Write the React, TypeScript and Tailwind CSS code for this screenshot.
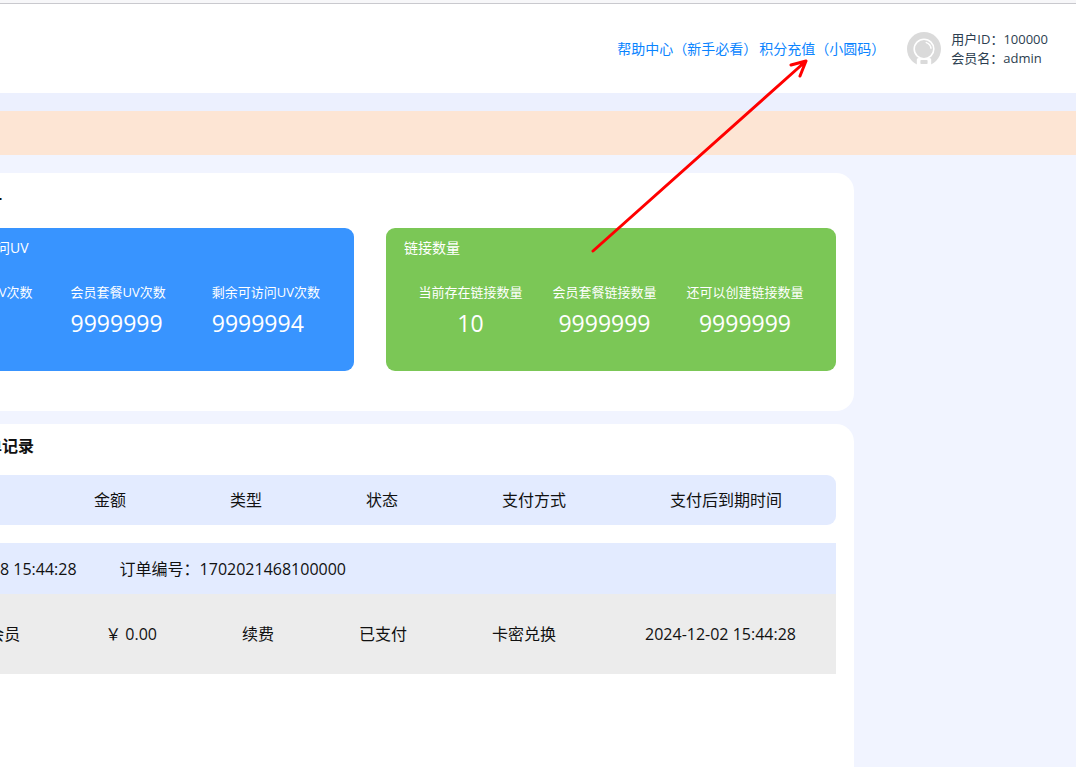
const linkStats = [
  { label: '当前存在链接数量', value: '10' },
  { label: '会员套餐链接数量', value: '9999999' },
  { label: '还可以创建链接数量', value: '9999999' },
];

const uvStats = [
  { label: '会员套餐UV次数', value: '9999999' },
  { label: '剩余可访问UV次数', value: '9999994' },
];

const columns = ['金额', '类型', '状态', '支付方式', '支付后到期时间'];
const order = ['会员', '￥ 0.00', '续费', '已支付', '卡密兑换', '2024-12-02 15:44:28'];

function Avatar() {
  return (
    <svg viewBox="0 0 34 34" className="h-[34px] w-[34px] shrink-0" aria-hidden="true">
      <circle cx="17" cy="17" r="17" fill="#dadada" />
      <circle cx="17" cy="17" r="9.8" fill="none" stroke="#fff" strokeWidth="1.6" />
      <path d="M19.3 10.6c2.6.9 4.3 2.8 4.7 5.6" fill="none" stroke="#fff" strokeWidth="1.5" strokeLinecap="round" />
      <path d="M9.8 34v-6.2c0-1.1.7-1.8 1.8-1.8h10.8c1.1 0 1.8.7 1.8 1.8V34Z" fill="#fff" />
      <rect x="13.4" y="28" width="7.2" height="4" rx="0.8" fill="#dadada" />
    </svg>
  );
}

function Header() {
  return (
    <header className="h-[93px] border-t-[3px] border-[#f7f7f9] bg-white">
      <div className="flex h-full items-center justify-end border-t border-[#c9c9ce] pr-7">
        <nav className="flex gap-0.5 text-sm text-[#0a84ff]">
          <a href="#help">帮助中心（新手必看）</a>
          <a href="#recharge">积分充值（小圆码）</a>
        </nav>
        <div className="ml-[22px] flex items-center gap-[10px]">
          <Avatar />
          <div className="text-[13px] leading-[19px] text-[#2c3e50]">
            <p>用户ID：100000</p>
            <p>会员名：admin</p>
          </div>
        </div>
      </div>
    </header>
  );
}

function Overview() {
  return (
    <section className="rounded-r-[18px] bg-white pr-[18px] pt-4 pb-10">
      <h2 className="h-[39px] pl-0.5 text-base leading-6 font-bold">计</h2>
      <div className="flex gap-8">
        <div className="h-[143px] flex-1 rounded-r-[9px] bg-[#3894ff] pt-[10px] pl-3 text-white">
          <h3 className="text-sm leading-5">问UV</h3>
          <div className="mt-6 flex justify-end gap-[46px] pr-[34px]">
            <p className="-mr-2 text-[13px] leading-5">V次数</p>
            {uvStats.map((s) => (
              <div key={s.label}>
                <p className="text-[13px] leading-5">{s.label}</p>
                <p className="mt-[5px] text-[23px] leading-8">{s.value}</p>
              </div>
            ))}
          </div>
        </div>
        <div className="h-[143px] w-[450px] rounded-[9px] bg-[#7bc756] pt-[10px] text-white">
          <h3 className="pl-[18px] text-sm leading-5">链接数量</h3>
          <div className="mt-6 flex justify-center gap-[30px] text-center">
            {linkStats.map((s) => (
              <div key={s.label}>
                <p className="text-[13px] leading-5">{s.label}</p>
                <p className="mt-[5px] text-[23px] leading-8">{s.value}</p>
              </div>
            ))}
          </div>
        </div>
      </div>
    </section>
  );
}

function Orders() {
  return (
    <section className="mt-[13px] flex-1 rounded-tr-[18px] bg-white pt-[10px] pr-[18px]">
      <h2 className="h-[41px] pl-0.5 text-base leading-6 font-bold">单记录</h2>
      <table className="block text-base text-[#111]">
        <thead className="block">
          <tr className="flex h-[50px] items-center justify-end gap-[104px] rounded-r-[9px] bg-[#e3ebff] pr-[54px]">
            {columns.map((c) => (
              <th key={c} className="font-normal whitespace-nowrap">{c}</th>
            ))}
          </tr>
        </thead>
        <tbody className="block pt-[18px]">
          <tr className="flex h-[51px] items-center gap-[43px] bg-[#e3ebff] pl-4">
            <td>8 15:44:28</td>
            <td>订单编号：1702021468100000</td>
          </tr>
          <tr className="flex h-20 items-center justify-end gap-[85px] bg-[#ececec] pr-9">
            {order.map((cell) => (
              <td key={cell} className="text-center whitespace-nowrap last:w-[159px]">{cell}</td>
            ))}
          </tr>
        </tbody>
      </table>
    </section>
  );
}

export default function App() {
  return (
    <div className="relative flex min-h-screen flex-col overflow-hidden bg-[#f1f4ff] font-['Open_Sans','Noto_Sans_CJK_SC',sans-serif] text-[#111]">
      <Header />
      <div className="h-[18px] bg-[#ecf0fe]" />
      <div className="h-11 bg-[#fde5d4]" />
      <main className="mt-[18px] mr-[222px] -ml-4 flex flex-1 flex-col">
        <Overview />
        <Orders />
      </main>

      {/* pointer to the recharge link */}
      <svg
        viewBox="0 0 220 198"
        className="pointer-events-none absolute top-[57px] right-[266px] h-[198px] w-[220px]"
        fill="none"
        stroke="#ff0000"
        strokeWidth="3"
        strokeLinecap="round"
        strokeLinejoin="round"
        aria-hidden="true"
      >
        <path d="M3 194 216 4M201 8l15-4-6 15" />
      </svg>
    </div>
  );
}
